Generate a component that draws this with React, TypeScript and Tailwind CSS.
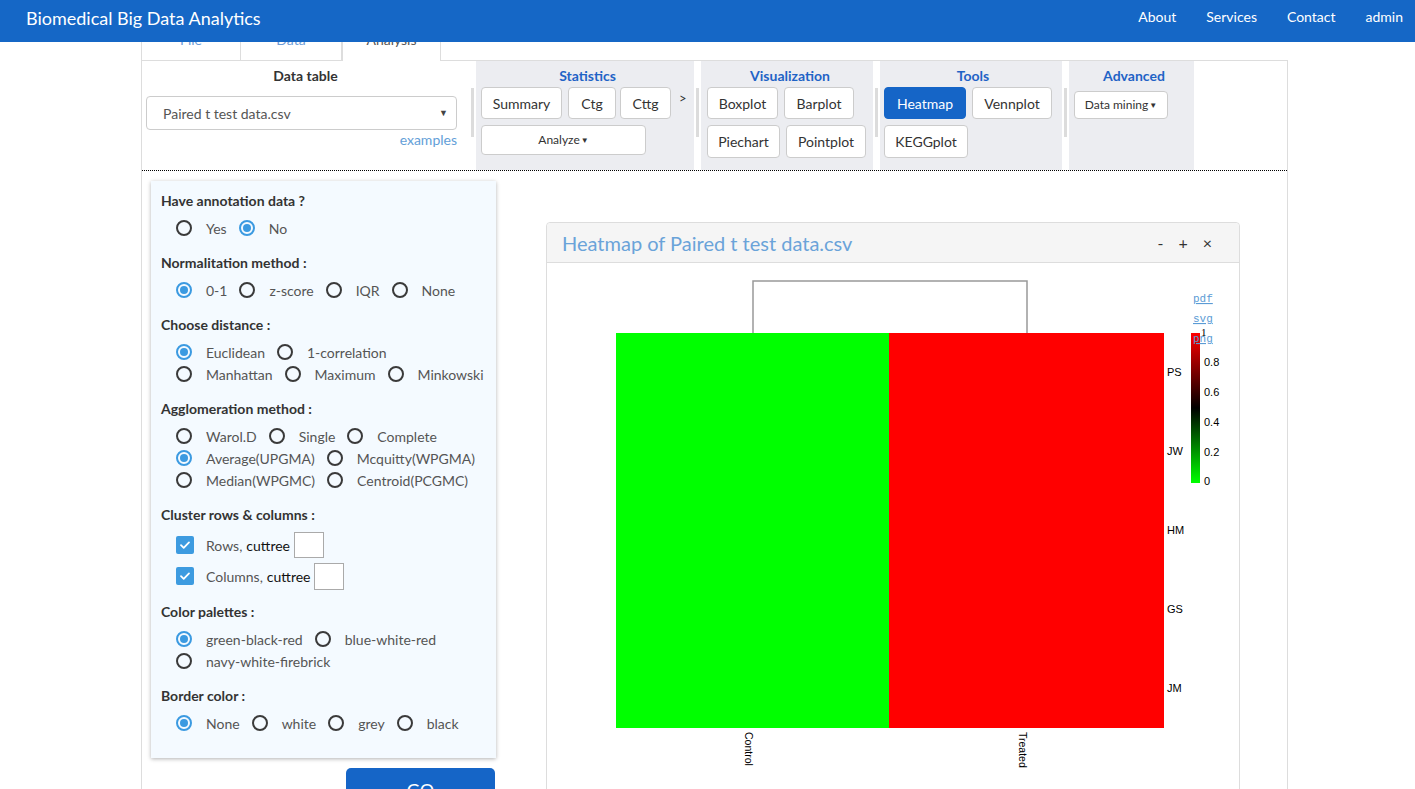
import React from 'react';

const FONT = { fontFamily: 'Lato, "Noto Sans", "Liberation Sans", sans-serif' };

function Radio({ checked }: { checked?: boolean }) {
  return checked ? (
    <span className="w-4 h-4 rounded-full border-2 border-[#3b9ae1] flex items-center justify-center shrink-0">
      <span className="w-2 h-2 rounded-full bg-[#3b9ae1]" />
    </span>
  ) : (
    <span className="w-4 h-4 rounded-full border-2 border-[#3a3a3a] shrink-0" />
  );
}

function Opt({ label, checked }: { label: string; checked?: boolean }) {
  return (
    <span className="inline-flex items-center gap-[14px] mr-[12px]">
      <Radio checked={checked} />
      <span>{label}</span>
    </span>
  );
}

function Row({ children }: { children: React.ReactNode }) {
  return <div className="h-[22px] flex items-center pl-[15px] text-[14px] text-[#555]">{children}</div>;
}

function Label({ children }: { children: React.ReactNode }) {
  return <div className="leading-[20px] text-[14px] font-bold text-[#333] mb-[6px]">{children}</div>;
}

function Check() {
  return (
    <span className="w-[18px] h-[18px] rounded-[2px] bg-[#3d9be0] flex items-center justify-center shrink-0">
      <svg width="12" height="12" viewBox="0 0 12 12" fill="none">
        <path d="M2 6.2l2.7 2.6L10 3.4" stroke="#fff" strokeWidth="1.8" strokeLinecap="round" strokeLinejoin="round" />
      </svg>
    </span>
  );
}

function Btn({ w, active, children, small, h = 'h-[32px]' }: { w: string; active?: boolean; children: React.ReactNode; small?: boolean; h?: string }) {
  return (
    <button
      className={`${w} ${h} rounded-[4px] border ${active ? 'bg-[#1565c7] border-[#1565c7] text-white' : 'bg-white border-[#ccc] text-[#333]'} ${small ? 'text-[12px]' : 'text-[14px]'} flex items-center justify-center shrink-0`}
    >
      {children}
    </button>
  );
}

function Sep() {
  return (
    <div className="w-[7px] pt-[27px] pl-[2px] shrink-0">
      <div className="w-[3px] h-[49px] bg-[#dcdcdc]" />
    </div>
  );
}

function SectionTitle({ children }: { children: React.ReactNode }) {
  return <div className="text-center font-bold text-[14px] leading-[20px] text-[#1f63c6] pt-[5px] mb-[1px]">{children}</div>;
}

function Heatmap() {
  const rows = ['PS', 'JW', 'HM', 'GS', 'JM'];
  const legend = ['1', '0.8', '0.6', '0.4', '0.2', '0'];
  return (
    <svg width="692" height="540" className="block">
      <defs>
        <linearGradient id="lg" x1="0" y1="0" x2="0" y2="1">
          <stop offset="0" stopColor="#ff0000" />
          <stop offset="0.5" stopColor="#000000" />
          <stop offset="1" stopColor="#00ff00" />
        </linearGradient>
      </defs>
      <path d="M206 70V18H480V70" fill="none" stroke="#999" strokeWidth="1.5" />
      <rect x="69" y="70" width="273" height="395" fill="#00ff00" />
      <rect x="342" y="70" width="275" height="395" fill="#ff0000" />
      {rows.map((r, i) => (
        <text key={r} x="620" y={110 + i * 79} fontSize="11" dominantBaseline="middle" fill="#000" fontFamily="'Liberation Sans', sans-serif">
          {r}
        </text>
      ))}
      <text transform="translate(201,469) rotate(90)" fontSize="10.5" dominantBaseline="middle" fill="#000" fontFamily="'Liberation Sans', sans-serif">
        Control
      </text>
      <text transform="translate(475,469) rotate(90)" fontSize="10.5" dominantBaseline="middle" fill="#000" fontFamily="'Liberation Sans', sans-serif">
        Treated
      </text>
      <rect x="644" y="70" width="9" height="150" fill="url(#lg)" />
      {legend.map((l, i) => (
        <text key={l} x={i === 0 ? 654 : 657} y={70 + i * 30 - (i === 5 ? 1 : 0)} fontSize="11" dominantBaseline="middle" fill="#000" fontFamily={i === 0 ? "'Liberation Serif', serif" : "'Liberation Sans', sans-serif"}>
          {l}
        </text>
      ))}
      {['pdf', 'svg', 'png'].map((t, i) => (
        <text key={t} x="646" y={39 + i * 20} fontSize="11" fill="#5b9bd5" textDecoration="underline" fontFamily="'Liberation Mono', monospace">
          {t}
        </text>
      ))}
    </svg>
  );
}

export default function App() {
  return (
    <div className="min-h-screen bg-white" style={FONT}>
      <nav className="fixed top-0 left-0 right-0 h-[42px] bg-[#1567c6] text-white z-10 flex items-start justify-between px-[26px]">
        <div className="pt-[6px] text-[18px] leading-[24px]">Biomedical Big Data Analytics</div>
        <div className="flex gap-[30px] pt-[7px] text-[14px] leading-[20px] mr-[-14px]">
          <span>About</span>
          <span>Services</span>
          <span>Contact</span>
          <span>admin</span>
        </div>
      </nav>

      <div className="pt-[20px] ml-[141px] w-[1147px]">
        <div className="flex border-b border-[#ddd] text-[14px]">
          <div className="w-[99px] h-[40px] border-l border-t border-[#ddd] text-center pt-[9px] leading-[20px] text-[#6d9bd6]">File</div>
          <div className="w-[101px] h-[40px] border-l border-t border-[#ddd] text-center pt-[9px] leading-[20px] text-[#6d9bd6]">Data</div>
          <div className="w-[100px] h-[41px] -mb-px bg-white border-l-2 border-r border-t border-[#ddd] text-center pt-[9px] leading-[20px] text-[#555]">Analysis</div>
        </div>

        <div className="border-l border-r border-[#ddd]">
          <div className="h-[110px] flex border-b border-dotted border-black">
            <div className="w-[327px] shrink-0">
              <div className="text-center font-bold text-[14px] leading-[20px] text-[#333] pt-[5px]">Data table</div>
              <div className="mt-[10px] ml-[4px] w-[311px] h-[34px] border border-[#ccc] rounded-[4px] flex items-center justify-between pl-[16px] pr-[8px] text-[14px] text-[#555]">
                <span>Paired t test data.csv</span>
                <span className="text-[9px] text-[#444]">▼</span>
              </div>
              <div className="text-right pr-[12px] text-[14px] leading-[20px] text-[#64a0d8]">examples</div>
            </div>
            <Sep />
            <div className="w-[218px] bg-[#ecedf1] pl-[5px] shrink-0">
              <SectionTitle>Statistics</SectionTitle>
              <div className="flex items-start">
                <Btn w="w-[81px]">Summary</Btn>
                <div className="w-[6px]" />
                <Btn w="w-[48px]">Ctg</Btn>
                <div className="w-[4px]" />
                <Btn w="w-[51px]">Cttg</Btn>
                <span className="ml-[8px] text-[13px] text-[#333] leading-[22px]">&gt;</span>
              </div>
              <div className="mt-[6px]">
                <Btn w="w-[165px]" h="h-[30px]" small>Analyze<span className="text-[8px] ml-[1px]">▼</span></Btn>
              </div>
            </div>
            <Sep />
            <div className="w-[172px] bg-[#ecedf1] pl-[6px] shrink-0">
              <SectionTitle>Visualization</SectionTitle>
              <div className="flex gap-[6px]">
                <Btn w="w-[71px]">Boxplot</Btn>
                <Btn w="w-[70px]">Barplot</Btn>
              </div>
              <div className="flex gap-[6px] mt-[6px]">
                <Btn w="w-[73px]" h="h-[33px]">Piechart</Btn>
                <Btn w="w-[80px]" h="h-[33px]">Pointplot</Btn>
              </div>
            </div>
            <Sep />
            <div className="w-[182px] bg-[#ecedf1] pl-[4px] shrink-0">
              <SectionTitle>Tools</SectionTitle>
              <div className="flex gap-[6px]">
                <Btn w="w-[82px]" active>Heatmap</Btn>
                <Btn w="w-[80px]">Vennplot</Btn>
              </div>
              <div className="flex mt-[6px]">
                <Btn w="w-[84px]" h="h-[33px]">KEGGplot</Btn>
              </div>
            </div>
            <Sep />
            <div className="w-[125px] bg-[#ecedf1] pl-[5px] shrink-0">
              <SectionTitle>Advanced</SectionTitle>
              <div className="mt-[5px]">
                <Btn w="w-[94px]" h="h-[28px]" small>Data mining<span className="text-[8px] ml-[1px]">▼</span></Btn>
              </div>
            </div>
          </div>

          <div className="flex pl-[9px] pt-[10px] h-[620px]">
            <div className="w-[345px] shrink-0 flex flex-col">
              <div className="bg-[#f4faff] shadow-[0_1px_4px_rgba(0,0,0,0.3)] px-[10px] pt-[10px] pb-[24px] shrink-0">
                <Label>Have annotation data ?</Label>
                <Row><Opt label="Yes" /><Opt label="No" checked /></Row>
                <div className="h-[14px]" />
                <Label>Normalitation method :</Label>
                <Row><Opt label="0-1" checked /><Opt label="z-score" /><Opt label="IQR" /><Opt label="None" /></Row>
                <div className="h-[14px]" />
                <Label>Choose distance :</Label>
                <Row><Opt label="Euclidean" checked /><Opt label="1-correlation" /></Row>
                <Row><Opt label="Manhattan" /><Opt label="Maximum" /><Opt label="Minkowski" /></Row>
                <div className="h-[14px]" />
                <Label>Agglomeration method :</Label>
                <Row><Opt label="Warol.D" /><Opt label="Single" /><Opt label="Complete" /></Row>
                <Row><Opt label="Average(UPGMA)" checked /><Opt label="Mcquitty(WPGMA)" /></Row>
                <Row><Opt label="Median(WPGMC)" /><Opt label="Centroid(PCGMC)" /></Row>
                <div className="h-[14px]" />
                <Label>Cluster rows &amp; columns :</Label>
                <div className="h-[28px] flex items-center pl-[15px] text-[14px] text-[#555]">
                  <Check />
                  <span className="ml-[12px]">Rows,</span>
                  <span className="ml-[4px] text-[#111]">cuttree</span>
                  <span className="ml-[4px] w-[30px] h-[26px] border border-[#aaa] bg-white" />
                </div>
                <div className="h-[28px] mt-[3px] flex items-center pl-[15px] text-[14px] text-[#555]">
                  <Check />
                  <span className="ml-[12px]">Columns,</span>
                  <span className="ml-[4px] text-[#111]">cuttree</span>
                  <span className="ml-[4px] w-[30px] h-[27px] border border-[#aaa] bg-white" />
                </div>
                <div className="h-[12px]" />
                <Label>Color palettes :</Label>
                <Row><Opt label="green-black-red" checked /><Opt label="blue-white-red" /></Row>
                <Row><Opt label="navy-white-firebrick" /></Row>
                <div className="h-[14px]" />
                <Label>Border color :</Label>
                <Row><Opt label="None" checked /><Opt label="white" /><Opt label="grey" /><Opt label="black" /></Row>
              </div>
              <button className="mt-[10px] ml-auto mr-[1px] w-[149px] h-[44px] shrink-0 bg-[#1565c7] rounded-[5px] text-white text-[18px]">GO</button>
            </div>

            <div className="ml-[50px] mt-[41px] w-[694px] shrink-0">
              <div className="border border-[#ddd] rounded-[4px] bg-white">
                <div className="h-[40px] bg-[#f5f5f5] border-b border-[#ddd] rounded-t-[4px] flex items-center justify-between pl-[15px] pr-[27px]">
                  <span className="text-[20px] text-[#6aa3d9]">Heatmap of Paired t test data.csv</span>
                  <span className="flex gap-[15px] text-[16px] text-[#333]">
                    <span>-</span>
                    <span>+</span>
                    <span>×</span>
                  </span>
                </div>
                <Heatmap />
              </div>
            </div>
          </div>
        </div>
      </div>
    </div>
  );
}
